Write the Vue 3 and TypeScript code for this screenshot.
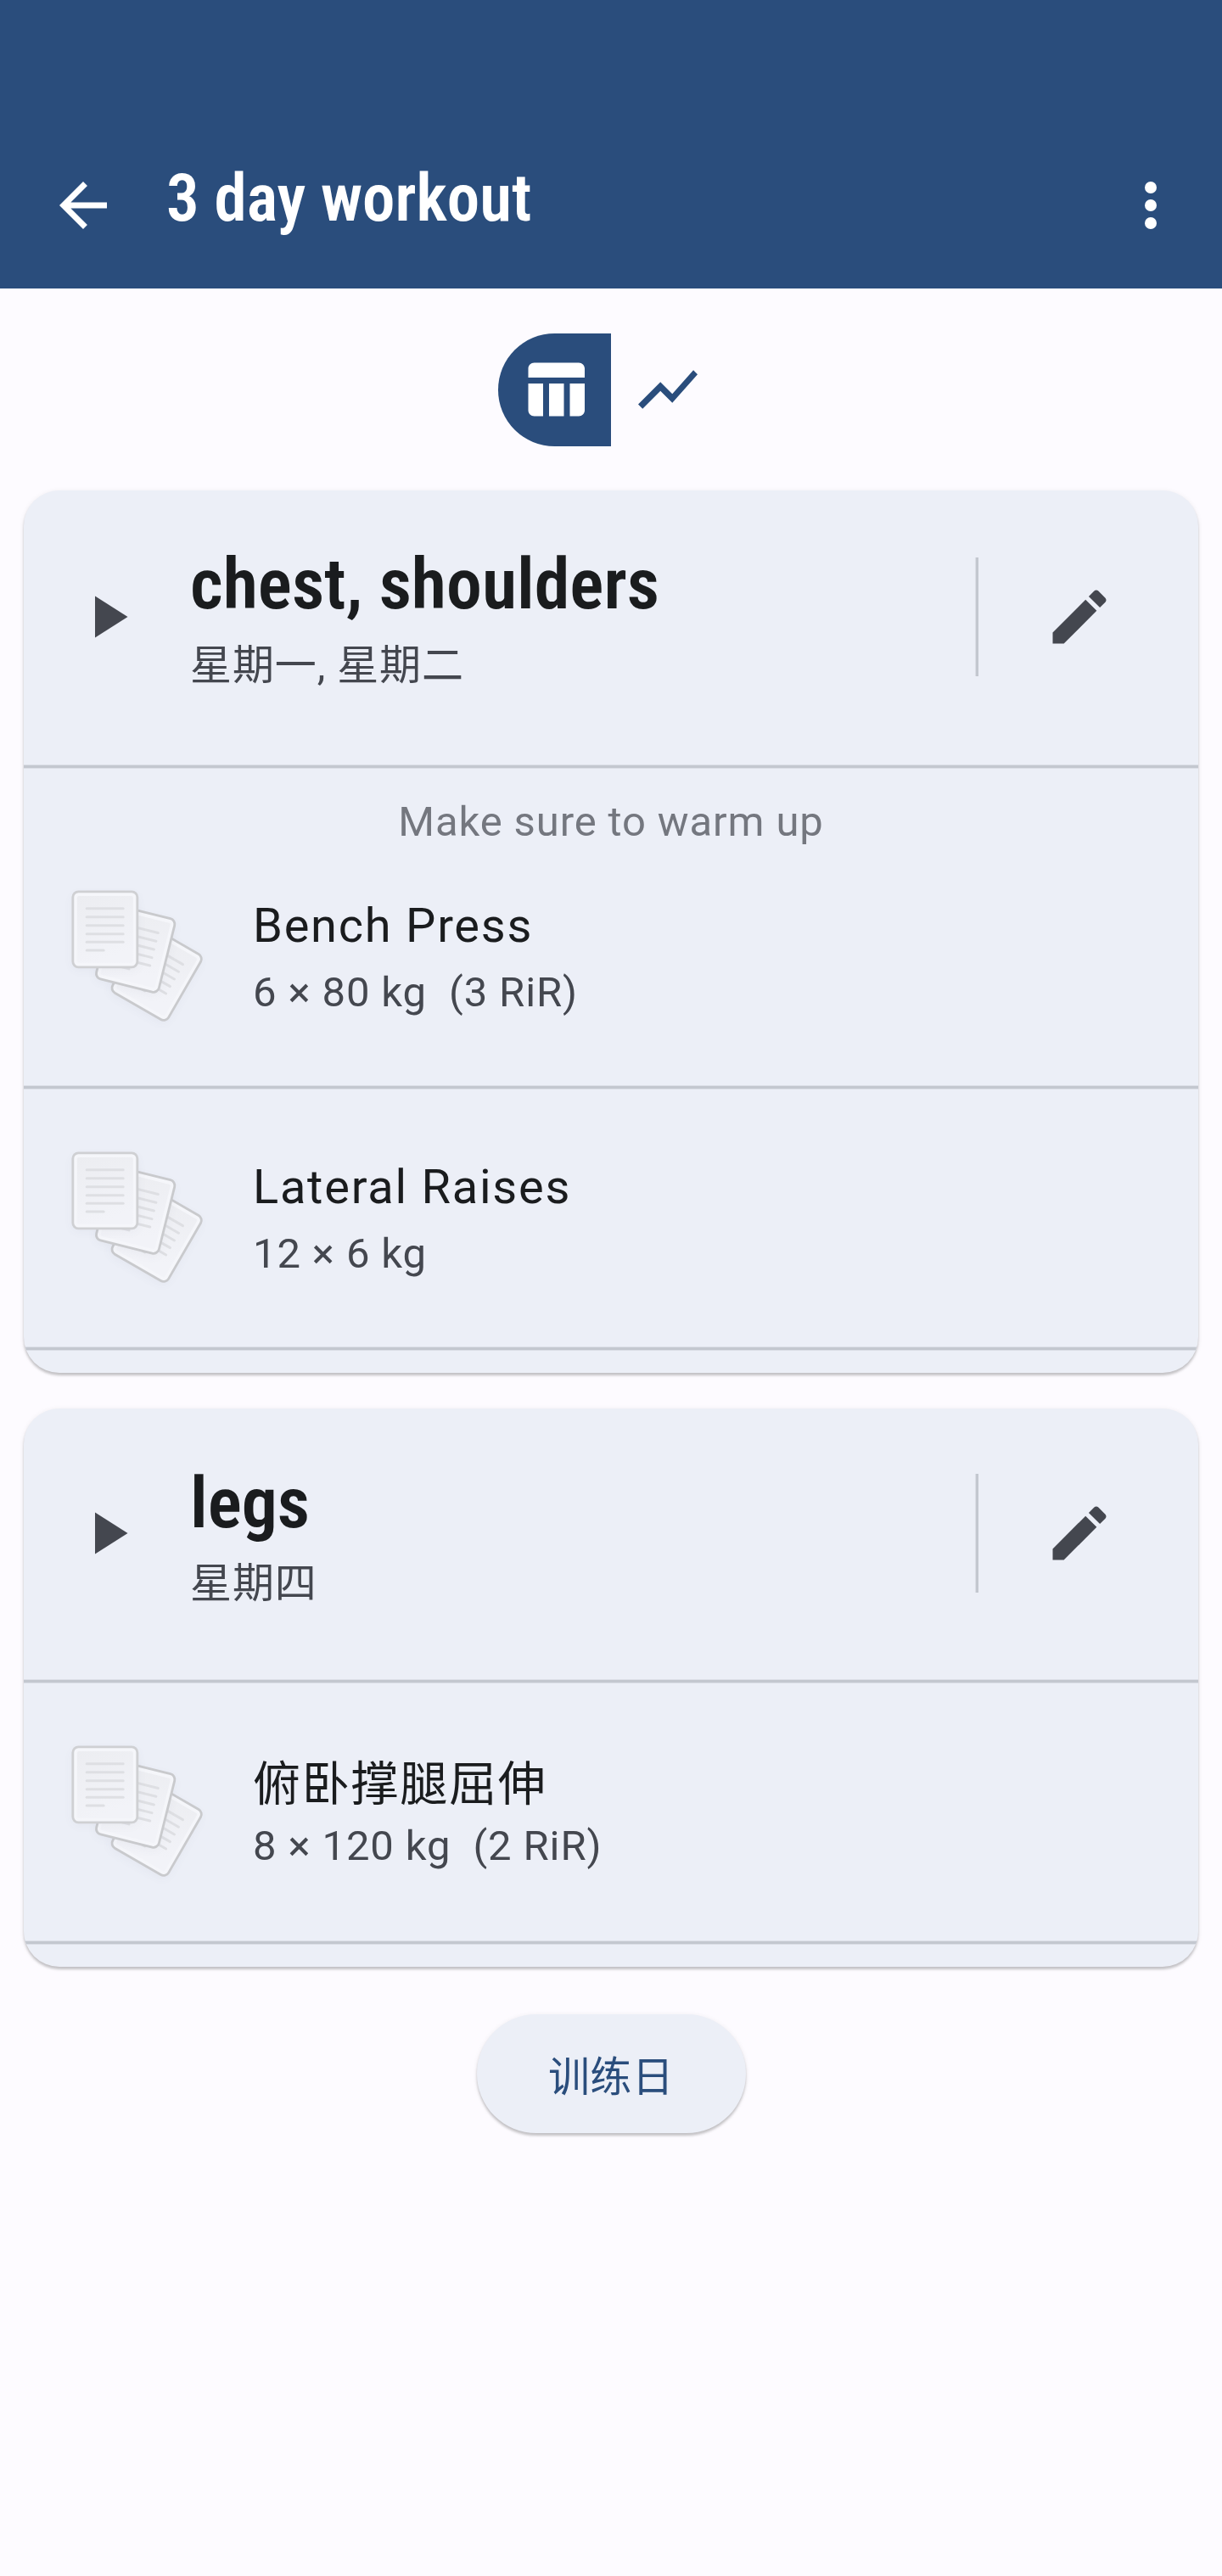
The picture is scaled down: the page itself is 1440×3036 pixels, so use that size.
<script setup lang="ts">
interface Exercise {
  name: string
  detail: string
  cjk?: boolean
}

interface WorkoutDay {
  title: string
  weekdays: string
  note?: string
  exercises: Exercise[]
}

const days: WorkoutDay[] = [
  {
    title: 'chest, shoulders',
    weekdays: '星期一, 星期二',
    note: 'Make sure to warm up',
    exercises: [
      { name: 'Bench Press', detail: '6 × 80 kg  (3 RiR)' },
      { name: 'Lateral Raises', detail: '12 × 6 kg' },
    ],
  },
  {
    title: 'legs',
    weekdays: '星期四',
    exercises: [{ name: '俯卧撑腿屈伸', detail: '8 × 120 kg  (2 RiR)', cjk: true }],
  },
]

// Stacked sheets of the placeholder picture, back to front
const sheets = [
  'translate(373 381) rotate(30)',
  'translate(298 294) rotate(14)',
  'translate(190.5 225)',
]
const sheetLines = [-74, -44, -14, 16, 45]
</script>

<template>
  <div class="screen">
    <header class="app-bar">
      <svg class="icon" viewBox="0 0 24 24"><path d="M20 11H7.83l5.59-5.59L12 4l-8 8 8 8 1.41-1.41L7.83 13H20v-2z" /></svg>
      <h1 class="app-title condensed">3 day workout</h1>
      <svg class="icon" viewBox="0 0 24 24"><circle cx="12" cy="6" r="2" /><circle cx="12" cy="12" r="2" /><circle cx="12" cy="18" r="2" /></svg>
    </header>

    <nav class="toggle">
      <button class="segment selected">
        <svg class="icon" viewBox="0 0 24 24"><path d="M10 10.02h5V21h-5V10.02zM17 21h3c1.1 0 2-.9 2-2v-9h-5v11zm3-18H5c-1.1 0-2 .9-2 2v3h19V5c0-1.1-.9-2-2-2zM3 19c0 1.1.9 2 2 2h3V10H3v9z" /></svg>
      </button>
      <button class="segment">
        <svg class="icon" viewBox="0 0 24 24"><path d="M3.5 18.49l6-6.01 4 4L22 6.92l-1.41-1.41-7.09 7.97-4-4L2 16.99z" /></svg>
      </button>
    </nav>

    <main class="days">
      <section v-for="day in days" :key="day.title" class="card">
        <div class="card-head" :class="{ tall: day.note }">
          <svg class="icon play" viewBox="0 0 24 24"><path d="M8 5v14l11-7z" /></svg>
          <div class="head-text">
            <h2 class="day-title condensed">{{ day.title }}</h2>
            <p class="weekdays">{{ day.weekdays }}</p>
          </div>
          <span class="bar"></span>
          <svg class="icon edit" viewBox="0 0 24 24"><path d="M3 17.25V21h3.75L17.81 9.94l-3.75-3.75L3 17.25zM20.71 7.04c.39-.39.39-1.02 0-1.41l-2.34-2.34c-.39-.39-1.02-.39-1.41 0l-1.83 1.83 3.75 3.75 1.83-1.83z" /></svg>
        </div>
        <div class="divider"></div>
        <p v-if="day.note" class="note">{{ day.note }}</p>
        <template v-for="exercise in day.exercises" :key="exercise.name">
          <div class="exercise">
            <svg class="sheets" viewBox="71 86 468 468">
              <defs>
                <linearGradient id="sheet-fill" x1="0" y1="0" x2="0.3" y2="1">
                  <stop offset="0" stop-color="#ecedf1" />
                  <stop offset="1" stop-color="#f2f3f8" />
                </linearGradient>
                <filter id="sheet-shadow" x="-30%" y="-30%" width="160%" height="160%">
                  <feGaussianBlur stdDeviation="18" />
                </filter>
              </defs>
              <g v-for="(transform, index) in sheets" :key="index" :transform="transform">
                <rect x="-116" y="-124" width="232" height="268" rx="20" fill="#50587a" opacity="0.05" filter="url(#sheet-shadow)" />
                <rect x="-114" y="-133.5" width="228" height="267" rx="20" fill="#f5f6fa" :stroke="index === 2 ? '#cfd0d3' : '#c9cacd'" stroke-width="8.5" />
                <rect x="-99" y="-118" width="198" height="236" rx="6" fill="url(#sheet-fill)" />
                <g stroke="#dedfe3" stroke-width="9" stroke-linecap="round">
                  <path v-for="y in sheetLines" :key="y" :d="`M-65 ${y}H64`" />
                  <path d="M-65 74H-5" />
                </g>
              </g>
            </svg>
            <div class="exercise-text" :class="{ cjk: exercise.cjk }">
              <h3 class="exercise-name">{{ exercise.name }}</h3>
              <p class="exercise-detail">{{ exercise.detail }}</p>
            </div>
          </div>
          <div class="divider"></div>
        </template>
      </section>
    </main>

    <button class="add-day">训练日</button>
  </div>
</template>

<style>
body {
  background: #fdfbff;
}
</style>

<style scoped>
.screen {
  width: 1440px;
  min-height: 3036px;
  display: flex;
  flex-direction: column;
  background: #fdfbff;
  color: #1a1c1e;
  font-family: Roboto, "Noto Sans CJK SC", sans-serif;
}

h1,
h2,
h3,
p {
  margin: 0;
}

button {
  border: 0;
  padding: 0;
  background: none;
  font: inherit;
}

.condensed {
  font-family: "Roboto Condensed", Roboto, sans-serif;
  font-stretch: 75%;
  font-weight: 600;
  white-space: nowrap;
}

.icon {
  width: 84px;
  height: 84px;
  flex: none;
  fill: currentColor;
}

.app-bar {
  box-sizing: border-box;
  height: 340px;
  padding: 144px 42px 0 56px;
  display: flex;
  align-items: center;
  background: #2a4d7c;
  color: #fff;
}

.app-title {
  flex: 1;
  margin: 0 0 17px 56px;
  font-size: 77px;
  line-height: 98px;
}

.toggle {
  display: flex;
  justify-content: center;
  padding: 52.5px 0;
  height: 132.5px;
}

.segment {
  width: 133px;
  height: 133px;
  display: flex;
  align-items: center;
  justify-content: center;
  color: #2a4d7c;
}

.segment.selected {
  border-radius: 67px 0 0 67px;
  background: #2a4d7c;
  color: #fff;
}

.days {
  display: flex;
  flex-direction: column;
  gap: 42px;
  padding: 0 28px;
}

.card {
  border-radius: 42px;
  background: #eceff7;
  overflow: hidden;
  box-shadow: 0 3px 3px rgba(0, 0, 0, 0.2), 0 1px 6px rgba(0, 0, 0, 0.07);
}

.card-head {
  display: flex;
  align-items: center;
  height: 294px;
  color: #44474f;
}

.card-head.tall {
  height: 298px;
}

.play {
  margin-left: 56px;
}

.head-text {
  flex: 1;
  margin-left: 56px;
  padding-top: 4.5px;
}

.tall .head-text {
  padding-top: 0;
}

.day-title {
  font-size: 84px;
  line-height: 112px;
  color: #1a1c1e;
}

.weekdays {
  margin-top: 4.5px;
  font-size: 49px;
  line-height: 70px;
  letter-spacing: 0.875px;
}

.bar {
  width: 3px;
  height: 140px;
  border-left: 1px solid #dcdfe7;
  background: #c3c7cf;
}

.edit {
  margin: 0 98px 0 77px;
}

.divider {
  height: 56px;
  display: flex;
  align-items: center;
}

.divider::before {
  content: "";
  flex: 1;
  height: 3px;
  background: #c3c7cf;
  border: solid #dcdfe7;
  border-width: 1px 0;
}

.note {
  height: 70px;
  line-height: 73px;
  text-align: center;
  font-size: 49px;
  letter-spacing: 0.875px;
  color: #74777f;
}

.exercise {
  height: 252px;
  display: flex;
  align-items: flex-start;
}

.sheets {
  width: 156px;
  height: 156px;
  margin: 47px 0 0 55.5px;
  overflow: visible;
}

.exercise-text {
  margin: 47px 0 0 58.5px;
}

.exercise-text.cjk {
  margin-top: 51px;
}

.exercise-name {
  font-size: 56px;
  font-weight: 400;
  line-height: 84px;
  letter-spacing: 1.75px;
}

.exercise-detail {
  margin-top: 2.5px;
  font-size: 49px;
  line-height: 70px;
  letter-spacing: 0.875px;
  white-space: pre;
  color: #44474f;
}

.cjk .exercise-detail {
  margin-top: -3.5px;
}

.add-day {
  align-self: center;
  width: 317px;
  height: 140px;
  margin-top: 56px;
  border-radius: 70px;
  background: #eceff7;
  color: #2a4d7c;
  font-size: 49px;
  letter-spacing: 0.35px;
  box-shadow: 0 3px 3px rgba(0, 0, 0, 0.2), 0 1px 6px rgba(0, 0, 0, 0.07);
}
</style>
